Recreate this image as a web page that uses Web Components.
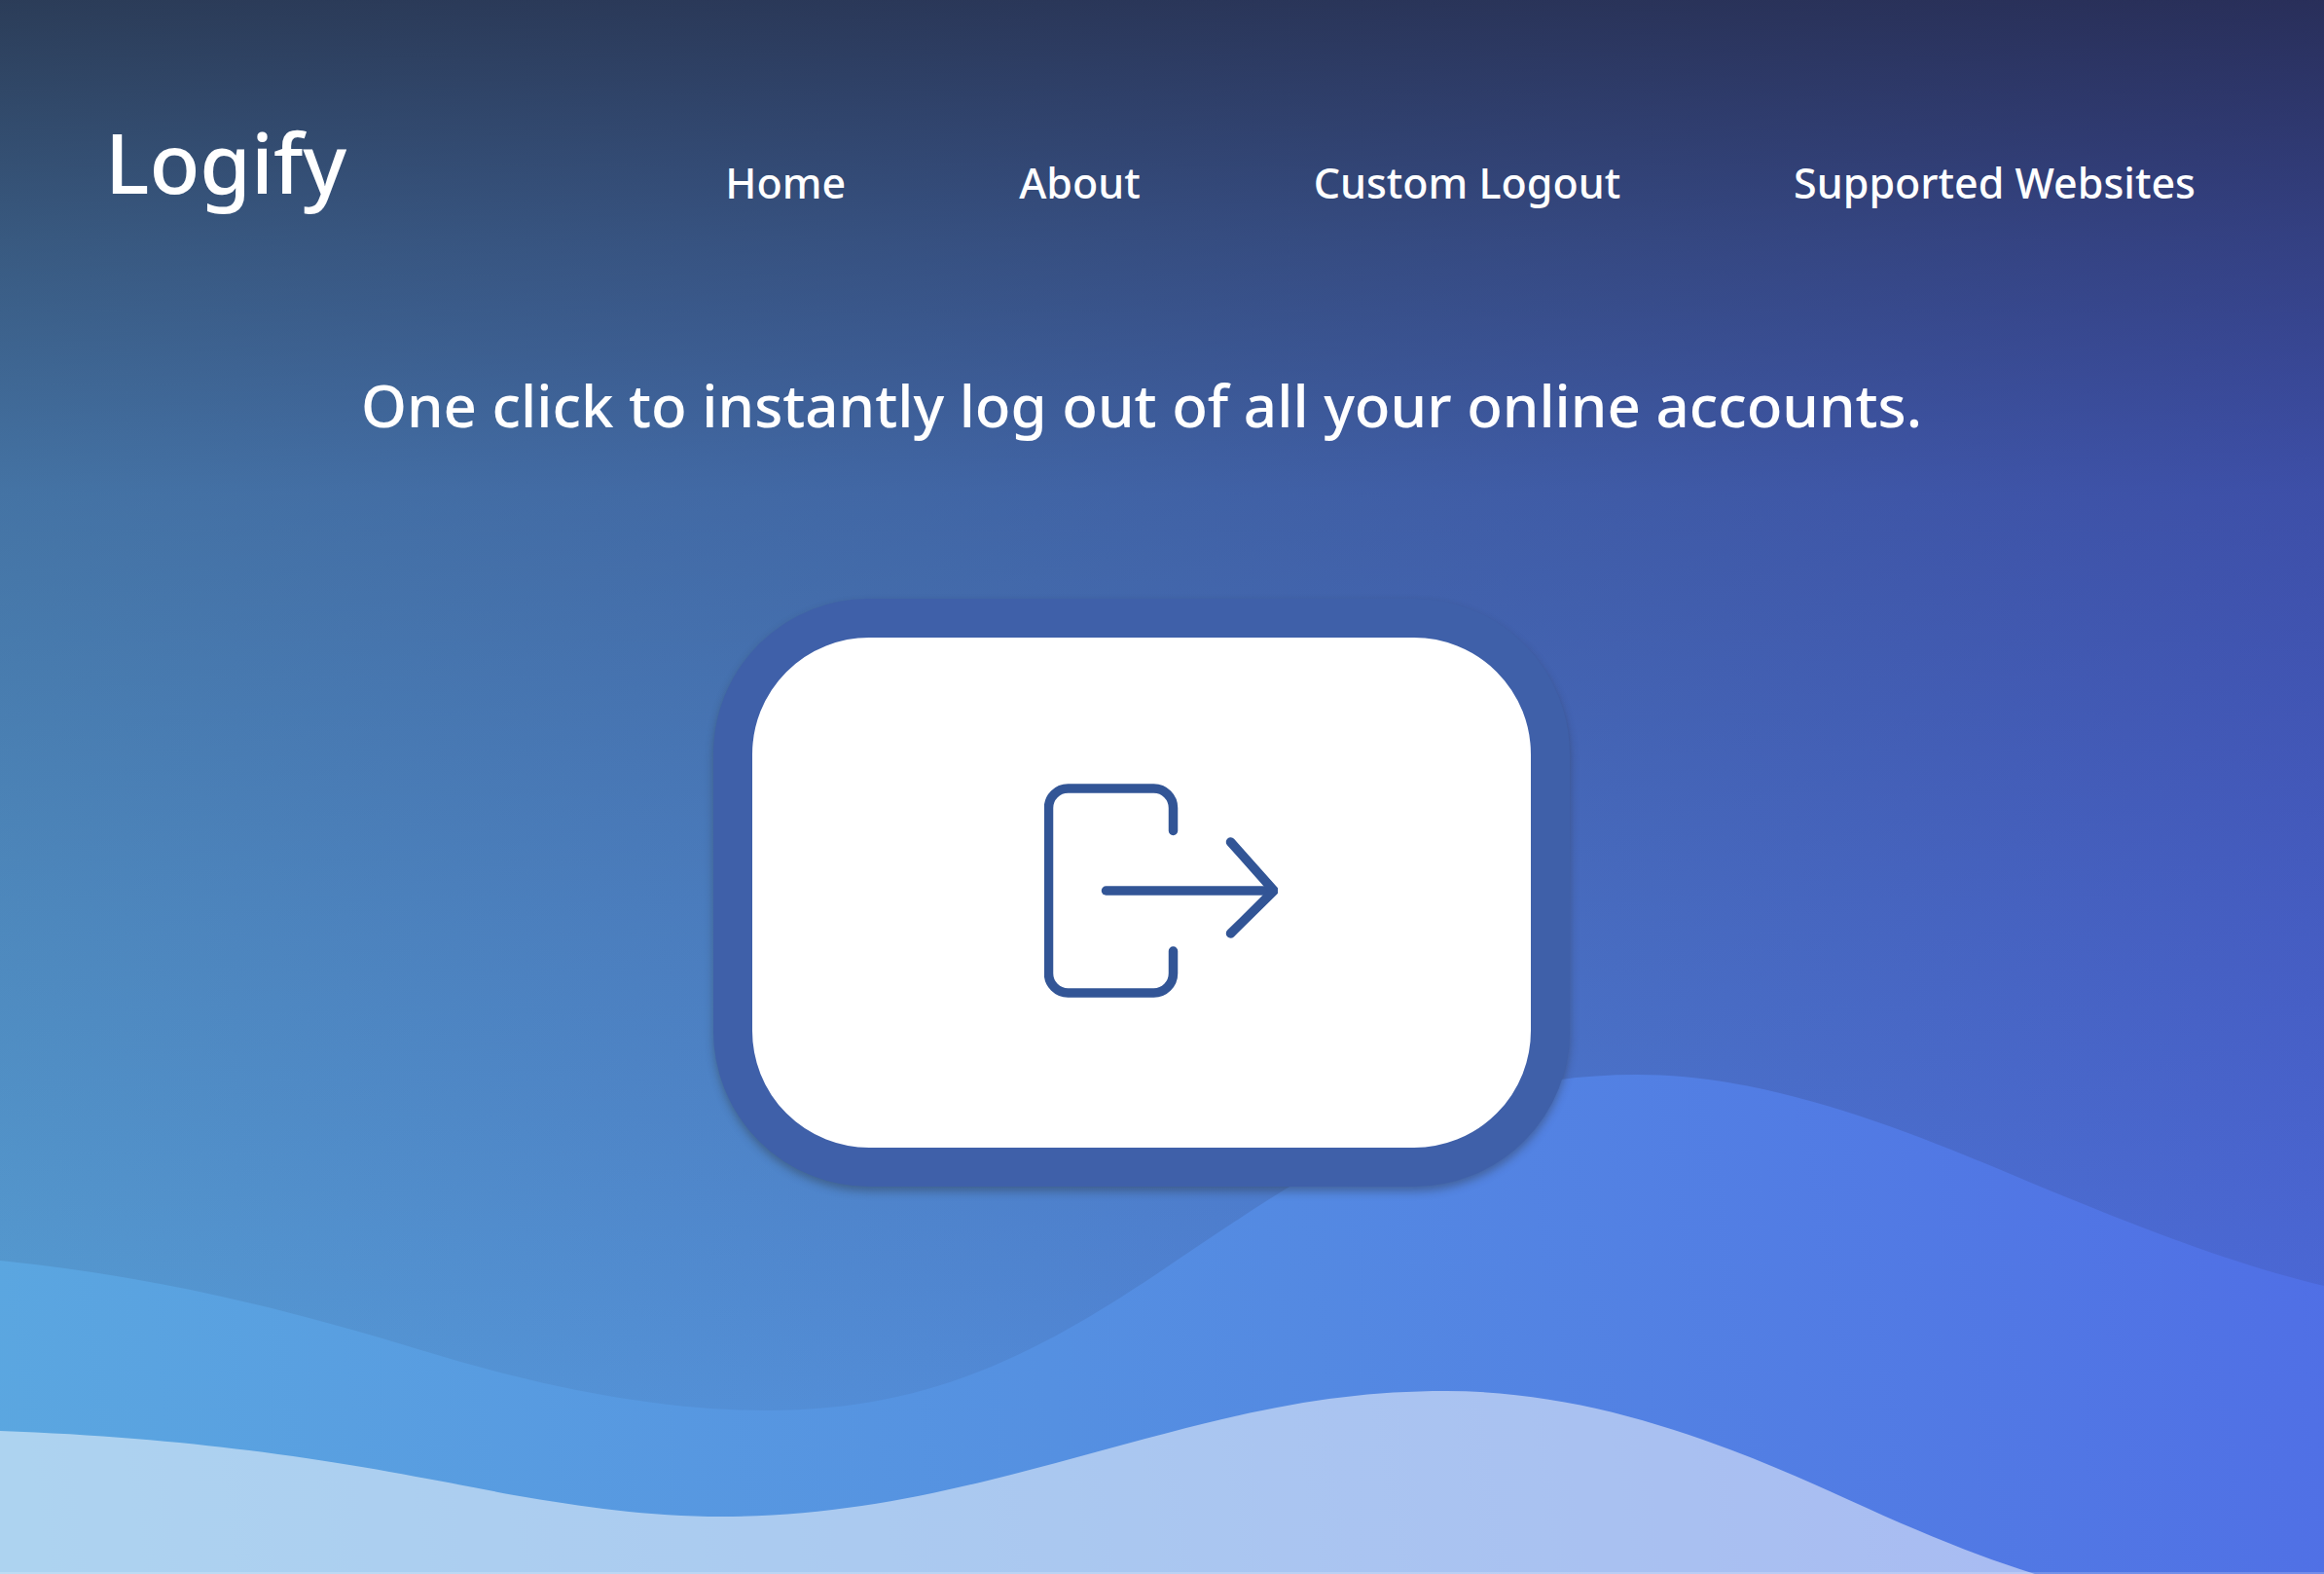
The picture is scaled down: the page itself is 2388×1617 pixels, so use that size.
<!DOCTYPE html>
<html lang="en">
<head>
<meta charset="utf-8">
<title>Logify</title>
<style>
  body {
    margin: 0;
    color: #fff;
    font-family: "Noto Sans", "Open Sans", sans-serif;
  }
</style>
</head>
<body>
<logify-page>
  <wave-backdrop slot="backdrop"></wave-backdrop>
  <site-header slot="header" brand="Logify">
    <nav-link href="#home">Home</nav-link>
    <nav-link href="#about">About</nav-link>
    <nav-link href="#custom">Custom Logout</nav-link>
    <nav-link href="#websites">Supported Websites</nav-link>
  </site-header>
  <tag-line>One click to instantly log out of all your online accounts.</tag-line>
  <logout-button label="Log out of all accounts"></logout-button>
</logify-page>

<script>
class LogifyPage extends HTMLElement {
  constructor() {
    super();
    const root = this.attachShadow({ mode: "open" });
    // backdrop and content share the same grid cell
    root.innerHTML = `
    <style>
      :host {
        display: grid;
        min-height: 100vh;
      }
      ::slotted([slot="backdrop"]), .content {
        grid-area: 1 / 1;
        min-width: 0;
      }
      .content {
        z-index: 1;
        padding-top: 106px;
      }
      main {
        display: flex;
        flex-direction: column;
        align-items: center;
        gap: 155px;
        padding: 146px 42px 140px 0;
      }
    </style>
    <slot name="backdrop"></slot>
    <div class="content">
      <slot name="header"></slot>
      <main><slot></slot></main>
    </div>`;
  }
}

class WaveBackdrop extends HTMLElement {
  constructor() {
    super();
    const root = this.attachShadow({ mode: "open" });
    root.innerHTML = `
    <style>
      :host {
        display: grid;
        isolation: isolate;
        background: linear-gradient(81deg, #5ba7e0, #5590e1 42%, #4f6ae6);
        box-shadow: inset 0 -2px rgba(255, 255, 255, 0.2);
      }
      svg {
        width: 100%;
        height: 100%;
        min-height: 0;
      }
    </style>
    ${this.buildWaves()}`;
  }

  /**
   * @return {string}
   */
  buildWaves() {
    return `<svg viewBox="0 0 2388 1617" preserveAspectRatio="none" aria-hidden="true">
      <defs>
        <linearGradient id="shade" gradientUnits="userSpaceOnUse" x1="0" y1="0" x2="0" y2="1450">
          <stop offset="0" stop-color="#1c1b2b" stop-opacity="0.75"/>
          <stop offset="0.17" stop-color="#1c1b2e" stop-opacity="0.54"/>
          <stop offset="0.35" stop-color="#1a1630" stop-opacity="0.34"/>
          <stop offset="0.65" stop-color="#1a1630" stop-opacity="0.2"/>
          <stop offset="1" stop-color="#1a1630" stop-opacity="0.06"/>
        </linearGradient>
      </defs>
      <path fill="url(#shade)" d="M0 0 V1295 C160 1311 300 1346 436 1388 C560 1426 680 1449 788 1449
        C950 1449 1060 1396 1200 1301 C1380 1179 1500 1104 1682 1104
        C1820 1104 1960 1162 2068 1207 C2180 1254 2290 1298 2388 1321 V0 Z"/>
      <path fill="#fff" fill-opacity="0.5" d="M0 1470 C250 1479 400 1512 528 1536 C600 1548 665 1558 742 1558
        C910 1558 1050 1511 1200 1472 C1310 1443 1390 1429 1486 1429
        C1640 1429 1780 1486 1900 1541 C1970 1573 2030 1598 2091 1617 H0 Z"/>
    </svg>`;
  }
}

class SiteHeader extends HTMLElement {
  constructor() {
    super();
    const root = this.attachShadow({ mode: "open" });
    root.innerHTML = `
    <style>
      :host { display: block; }
      header {
        display: flex;
        justify-content: space-between;
        align-items: flex-end;
        padding: 0 132px 0 108px;
      }
      .brand {
        color: inherit;
        font-size: 85px;
        font-weight: 500;
        line-height: 120px;
        text-decoration: none;
      }
      nav {
        display: flex;
        gap: 178px;
      }
    </style>
    <header>
      <a class="brand" href="#">${this.getAttribute("brand")}</a>
      <nav><slot></slot></nav>
    </header>`;
  }
}

class NavLink extends HTMLElement {
  constructor() {
    super();
    const root = this.attachShadow({ mode: "open" });
    root.innerHTML = `
    <style>
      :host { display: block; }
      a {
        display: block;
        color: inherit;
        font-size: 43px;
        font-weight: 500;
        line-height: 76px;
        text-decoration: none;
        white-space: nowrap;
      }
    </style>
    <a href="${this.getAttribute("href")}"><slot></slot></a>`;
  }
}

class TagLine extends HTMLElement {
  constructor() {
    super();
    const root = this.attachShadow({ mode: "open" });
    root.innerHTML = `
    <style>
      :host { display: block; }
      h1 {
        margin: 0;
        font-size: 60px;
        font-weight: 500;
        line-height: 88px;
        text-align: center;
      }
    </style>
    <h1><slot></slot></h1>`;
  }
}

class LogoutButton extends HTMLElement {
  constructor() {
    super();
    const root = this.attachShadow({ mode: "open" });
    root.innerHTML = `
    <style>
      :host { display: block; }
      button {
        display: grid;
        place-items: center;
        box-sizing: border-box;
        padding: 142px 260px 142px 300px;
        border: 40px solid #3f60a9;
        border-radius: 160px;
        background: #fff;
        box-shadow: 0 5px 8px rgba(40, 40, 40, 0.35);
        color: #325596;
        cursor: pointer;
      }
    </style>
    <button type="button" aria-label="${this.getAttribute("label")}">
      ${this.buildIcon(240)}
    </button>`;
  }

  /**
   * @param {number} w width svg
   * @return {string}
   */
  buildIcon(w) {
    return `<svg width="${w}" height="${w}" viewBox="0 0 240 240" fill="none"
      stroke="currentColor" stroke-width="9.500" stroke-linecap="round" stroke-linejoin="round">
      <path d="M132.500 56.500 V33 A20 20 0 0 0 112.500 13 H24.500 A20 20 0 0 0 4.500 33 V203 A20 20 0 0 0 24.500 223 H112.500 A20 20 0 0 0 132.500 203 V180"/>
      <path d="M63.500 118 H235"/>
      <path d="M191.500 68 L236 118 L191.500 162"/>
    </svg>`;
  }
}

customElements.define("logify-page", LogifyPage);
customElements.define("wave-backdrop", WaveBackdrop);
customElements.define("site-header", SiteHeader);
customElements.define("nav-link", NavLink);
customElements.define("tag-line", TagLine);
customElements.define("logout-button", LogoutButton);
</script>
</body>
</html>
